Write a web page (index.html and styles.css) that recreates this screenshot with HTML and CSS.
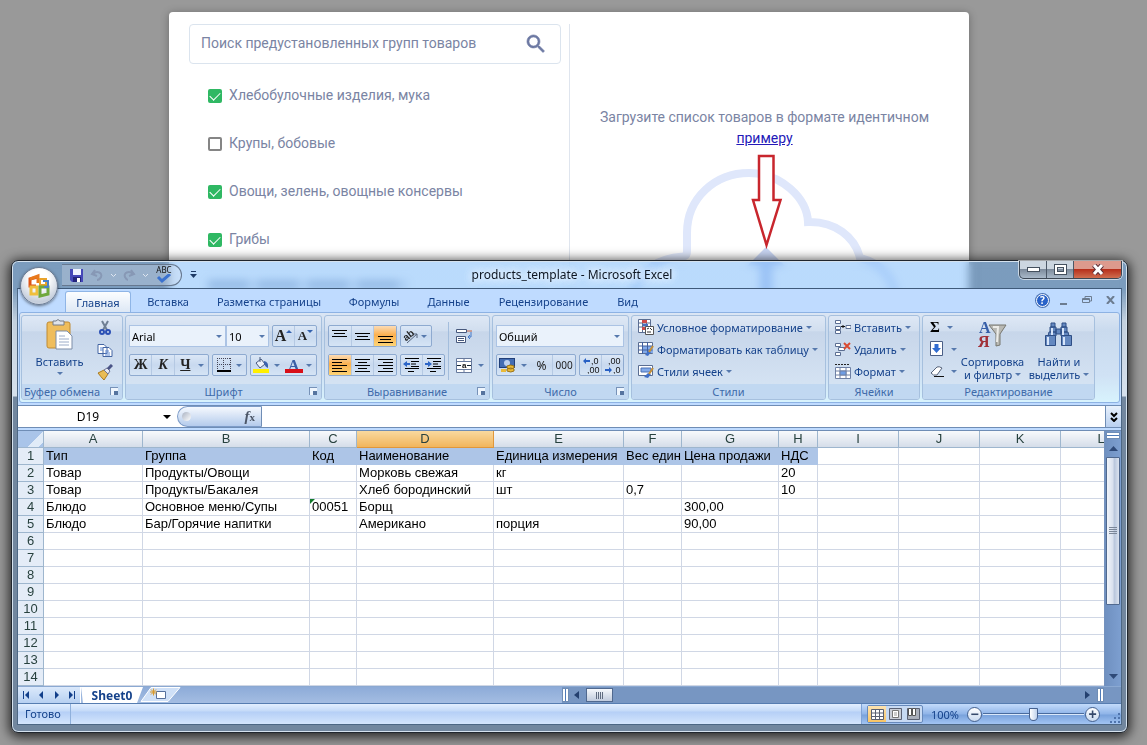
FILE: index.html
```html
<!DOCTYPE html>
<html lang="ru">
<head>
<meta charset="utf-8">
<title>products_template - Microsoft Excel</title>
<link rel="stylesheet" href="styles.css">
</head>
<body>
<main class="dialog">
  <section class="groups">
    <div class="search">
      <input type="text" aria-label="Поиск" placeholder="Поиск предустановленных групп товаров">
      <svg width="24" height="24" viewBox="0 0 24 24" fill="#6d79a3" stroke="#6d79a3" stroke-width=".6"><path d="M15.500 14h-.8l-.3-.3A6.500 6.500 0 1 0 13.700 14.400l.3.3v.8l5 5 1.500-1.500zm-6 0a4.500 4.500 0 1 1 0-9 4.500 4.500 0 0 1 0 9z"/></svg>
    </div>
    <label class="check"><input type="checkbox" checked>Хлебобулочные изделия, мука</label>
    <label class="check"><input type="checkbox">Крупы, бобовые</label>
    <label class="check"><input type="checkbox" checked>Овощи, зелень, овощные консервы</label>
    <label class="check"><input type="checkbox" checked>Грибы</label>
    <div class="more"></div>
  </section>
  <section class="upload">
    <p>Загрузите список товаров в формате идентичном <a href="#">примеру</a></p>
    <svg width="300" height="160" viewBox="0 0 300 160" fill="none">
      <path d="M18 150C18 120 42 105 68 103.500Q72 103 72 98V80C72 45 100 20 134 20C166 20 192 45 193 69C220 68 240 84 245 105C265 110 280 124 281 150" stroke="#dfe7fb" stroke-width="8"/>
      <path d="M151 94l19 19h-13v40h-12v-40h-13z" fill="#c9d6f4"/>
      <path d="M144 3H158.500V47H165.500L151.500 92L138 47H144Z" fill="#fff" stroke="#c8262d" stroke-width="2.500"/>
    </svg>
  </section>
</main>

<section class="window">
  <header class="titlebar">
    <div class="qat">
      <button class="save" aria-label="Сохранить"><svg width="16" height="16"><path d="M1 2h13v13H3l-2-2z" fill="#4548b8"/><path d="M4 2h8v6H4z" fill="#eef3ff"/><path d="M4 10h8v5H4z" fill="#22247c"/><path d="M8 11h3v4H8z" fill="#fff"/></svg></button>
      <button aria-label="Отменить"><svg width="16" height="16" fill="none" stroke="#8798b5" stroke-width="2"><path d="M6 3L3 7l5 2M4 7c4-4 10-1 8 3-1 2-3 3-4 3"/></svg></button>
      <svg class="chev" width="7" height="5" fill="none" stroke="#dfe6f0"><path d="M1 1l2.500 2.500L6 1"/></svg>
      <button aria-label="Повторить"><svg width="16" height="16" fill="none" stroke="#8798b5" stroke-width="2"><path d="M10 3l3 4-5 2M12 7C8 3 2 6 4 10c1 2 2 3 3 3"/></svg></button>
      <svg class="chev" width="7" height="5" fill="none" stroke="#dfe6f0"><path d="M1 1l2.500 2.500L6 1"/></svg>
      <button class="spell" aria-label="Орфография"><span>ABC</span><svg width="16" height="10" fill="none" stroke="#3b72cf" stroke-width="3"><path d="M2 3l4 4 8-7"/></svg></button>
    </div>
    <button class="qat-more" aria-label="Настройка панели"><svg width="7" height="8" fill="#1d3a66"><path d="M1 0h5v1H1zM0 3h7L3.500 7z"/></svg></button>
    <h1>products_template - Microsoft Excel</h1>
    <div class="controls">
      <button aria-label="Свернуть"><svg width="13" height="6"><rect x=".5" y=".5" width="12" height="4" fill="#fff" stroke="#44505e"/></svg></button>
      <button aria-label="Развернуть"><svg width="13" height="11"><rect x="2" y="2" width="9" height="7" fill="none" stroke="#44505e" stroke-width="4"/><rect x="2" y="2" width="9" height="7" fill="none" stroke="#fff" stroke-width="2"/></svg></button>
      <button class="close" aria-label="Закрыть"><svg width="12" height="11" fill="none"><path d="M2 1l8 9M10 1l-8 9" stroke="#5c3038" stroke-width="5"/><path d="M2 1l8 9M10 1l-8 9" stroke="#fff" stroke-width="3"/></svg></button>
    </div>
  </header>
  <button class="orb" aria-label="Кнопка Office"><svg width="26" height="26" fill="none" stroke-width="3"><path d="M12 4l-8 2v7h6" stroke="#dd5417"/><path d="M4 6l8-3v7" stroke="#e8791c"/><path d="M14 6h6v6h-6z" stroke="#e9a32b" stroke-width="2"/><path d="M5 14h6v7H5z" stroke="#f0bf3d"/><path d="M14 14v9l8-2v-7z" stroke="#6fa83d"/><path d="M17 8h5v6h-4" stroke="#4a82c8" stroke-width="2"/></svg></button>

  <div class="client">
    <nav class="tabs">
      <button class="tab active">Главная</button>
      <button class="tab t1">Вставка</button>
      <button class="tab t2">Разметка страницы</button>
      <button class="tab t3">Формулы</button>
      <button class="tab t4">Данные</button>
      <button class="tab t5">Рецензирование</button>
      <button class="tab t6">Вид</button>
      <div class="doc-controls">
        <button class="help" aria-label="Справка">?</button>
        <button aria-label="Свернуть книгу"><svg width="8" height="10"><path d="M0 8h7v2H0z" fill="#6c7c90"/></svg></button>
        <button aria-label="Восстановить книгу"><svg width="10" height="8" fill="none" stroke="#6c7c90"><path d="M3 2V.5h6.500V5H8M.5 2.500h7v4h-7zM0 3.500h8"/></svg></button>
        <button aria-label="Закрыть книгу"><svg width="9" height="8" stroke="#6c7c90" stroke-width="2"><path d="M1 0l7 8M8 0L1 8"/></svg></button>
      </div>
    </nav>

    <div class="ribbon">
      <section class="group clip">
        <div class="body">
          <button class="big"><svg width="30" height="32"><rect x="2" y="3" width="23" height="26" rx="2" fill="#efbd5c" stroke="#bf8a33"/><path d="M8 2h3q2-3 4 0h4v4H8z" fill="#dfe3ea" stroke="#767d88"/><path d="M11 12h11l5 5v13H11z" fill="#fff" stroke="#7d8da8"/><path d="M14 17h6M14 20h10M14 23h10M14 26h10" stroke="#9cacc8"/></svg><span>Вставить</span><i class="caret"></i></button>
          <div class="stack">
            <button aria-label="Вырезать"><svg width="16" height="16" fill="none"><path d="M5 1l5 9M11 1l-5 9" stroke="#6f7f94" stroke-width="2"/><circle cx="5" cy="12" r="2" stroke="#2b50b5" stroke-width="2"/><circle cx="11" cy="12" r="2" stroke="#2b50b5" stroke-width="2"/></svg></button>
            <button aria-label="Копировать"><svg width="16" height="16" fill="#fff" stroke="#4365a3"><path d="M1 2.500h6l3 3v6H1zM6 5.500h6l3 3v6H6z"/><path d="M3 6h3M3 8h3M8 9h4M8 11h5M8 13h5" stroke="#5c86cf"/></svg></button>
            <button aria-label="Формат по образцу"><svg width="16" height="16"><path d="M1 9l6-3 4 4-4 6q-3-3-6-7z" fill="#e9bc55" stroke="#a87820"/><path d="M7 6l3-2 3 3-2 3z" fill="#e6e9f2" stroke="#6d7393"/><path d="M11 5l4-4" stroke="#4a5487" stroke-width="3"/></svg></button>
          </div>
        </div>
        <footer>Буфер обмена<i class="launch"></i></footer>
      </section>

      <section class="group font">
        <div class="body rows">
          <div class="row">
            <div class="picks"><span class="pick wide"><select aria-label="Шрифт"><option>Arial</option></select><i class="caret"></i></span><span class="pick size"><select aria-label="Размер"><option>10</option></select><i class="caret"></i></span></div>
            <div class="set w45"><button class="serif big-a" aria-label="Увеличить размер">A<i class="tri up"></i></button><button class="serif small-a" aria-label="Уменьшить размер">A<i class="tri"></i></button></div>
          </div>
          <div class="row">
            <div class="set w80"><button class="serif">Ж</button><button class="serif"><em>К</em></button><button class="serif"><u>Ч</u></button><i class="caret"></i></div>
            <div class="set w35"><button aria-label="Границы"><svg width="14" height="14" stroke="#445"><path d="M0 .5h14M0 6.500h14M.5 0v12M6.500 0v12M13.500 0v12" stroke-dasharray="1 1"/><path d="M0 13h14" stroke="#000" stroke-width="2"/></svg></button><i class="caret"></i></div>
            <div class="set w67"><button aria-label="Заливка"><svg width="17" height="16"><path d="M3 6l5-4 4 5-5 4z" fill="#eef2fa" stroke="#47587c"/><path d="M11 4q5 1 4 7-3-1-4-5z" fill="#3c63ad"/><path d="M7 0v5" stroke="#47587c"/><path d="M0 12h16v4H0z" fill="#ffef00"/></svg></button><i class="caret"></i><button class="fc" aria-label="Цвет текста">A</button><i class="caret"></i></div>
          </div>
        </div>
        <footer>Шрифт<i class="launch"></i></footer>
      </section>

      <section class="group align">
        <div class="body split">
          <div class="rows">
            <div class="row">
              <div class="set w69"><button aria-label="По верхнему краю"><svg width="15" height="15" stroke="#000"><path d="M0 1.500h15M2 4.500h11M0 7.500h15"/></svg></button><button aria-label="По середине"><svg width="15" height="15" stroke="#000"><path d="M0 4.500h15M2 7.500h11M0 10.500h15"/></svg></button><button class="on" aria-label="По нижнему краю"><svg width="15" height="15" stroke="#000"><path d="M0 7.500h15M2 10.500h11M0 13.500h15"/></svg></button></div>
              <div class="set w32"><button aria-label="Ориентация"><svg width="18" height="18"><path d="M6 16L16 7m0 0v4m0-4h-4" stroke="#55647c" fill="none"/><text x="2" y="12" transform="rotate(-38 7 9)" class="ab">ab</text></svg></button><i class="caret"></i></div>
            </div>
            <div class="row">
              <div class="set w69"><button class="on" aria-label="По левому краю"><svg width="15" height="15" stroke="#000"><path d="M0 1.500h15M0 4.500h10M0 7.500h15M0 10.500h10M0 13.500h15"/></svg></button><button aria-label="По центру"><svg width="15" height="15" stroke="#000"><path d="M0 1.500h15M3 4.500h9M0 7.500h15M3 10.500h9M0 13.500h15"/></svg></button><button aria-label="По правому краю"><svg width="15" height="15" stroke="#000"><path d="M0 1.500h15M5 4.500h10M0 7.500h15M5 10.500h10M0 13.500h15"/></svg></button></div>
              <div class="set w45"><button aria-label="Уменьшить отступ"><svg width="17" height="16" stroke="#000"><path d="M2 1.500h14M8 4.500h8M8 7h5M8 9.500h8M2 11.500h14M5 14.500h6"/><path d="M0 7l4-3v2h3v2H4v2z" fill="#2d66c8" stroke="none"/></svg></button><button aria-label="Увеличить отступ"><svg width="17" height="16" stroke="#000"><path d="M2 1.500h14M8 4.500h8M8 7h5M8 9.500h8M2 11.500h14M5 14.500h6"/><path d="M7 7L3 4v2H0v2h3v2z" fill="#2d66c8" stroke="none"/></svg></button></div>
            </div>
          </div>
          <div class="wrap">
            <button aria-label="Перенос текста"><svg width="17" height="16" fill="#fff" stroke="#47587c"><path d="M.5 1.500h10v3H.5zM.5 8.500h9v6H.5z"/><path d="M11 3h5" stroke="#c4613d"/><path d="M2 10.500h6M2 12.500h6"/><path d="M15 4v5h-3m2-2l-2 2 2 2" stroke="#4378c8" fill="none"/></svg></button>
            <button aria-label="Объединить"><svg width="16" height="15" fill="#fff" stroke="#66799c"><path d="M.5.5h15v14H.5zM.5 3.500h15M.5 11.500h15M8 0v4M8 11v4"/><path d="M1 7.500h4M11 7.500h4" stroke="#123"/><text x="6" y="10" class="tiny">a</text></svg><i class="caret"></i></button>
          </div>
        </div>
        <footer>Выравнивание<i class="launch"></i></footer>
      </section>

      <section class="group number">
        <div class="body rows">
          <div class="row"><span class="pick full"><select aria-label="Числовой формат"><option>Общий</option></select><i class="caret"></i></span></div>
          <div class="row">
            <div class="set w80"><button aria-label="Денежный формат"><svg width="17" height="16"><rect x=".5" y="1.500" width="15" height="9" fill="#426cb3" stroke="#213f78"/><circle cx="8" cy="6" r="3" fill="#bcd0ef"/><path d="M8 9q4-2 7 0v2q-3 2-7 0zM8 12q4-2 7 0v2q-3 2-7 0z" fill="#e9ba38" stroke="#9a731a"/><path d="M2 12h5v3H2z" fill="#e9ba38"/></svg></button><i class="caret"></i><button class="num">%</button><button class="num zeros">000</button></div>
            <div class="set w45"><button aria-label="Увеличить разрядность"><svg width="18" height="18"><path d="M1 5l3-3v2h4v2H4v2z" fill="#2860c4"/><text x="9" y="8" class="dec">,0</text><text x="5" y="17" class="dec">,00</text></svg></button><button aria-label="Уменьшить разрядность"><svg width="18" height="18"><text x="4" y="8" class="dec">,00</text><path d="M8 14l-3-3v2H1v2h4v2z" fill="#2860c4"/><text x="9" y="17" class="dec">,0</text></svg></button></div>
          </div>
        </div>
        <footer>Число<i class="launch"></i></footer>
      </section>

      <section class="group styles">
        <div class="body list">
          <button><svg width="16" height="16"><path d="M.5.5h12v13H.5zM.5 4h12M.5 8h12M4.500 0v14M8.500 0v14" fill="#fff" stroke="#5b6e92"/><path d="M4 1h5v3H4zM4 8h4v3H4z" fill="#cf4b48"/><path d="M5 5h5v2H5z" fill="#496fc0"/><path d="M7.500 7.500h8v8h-8z" fill="#fff" stroke="#555"/><path d="M9 10l2-1M9 13h4M12 9l2 2" stroke="#333"/></svg><span>Условное форматирование</span><i class="caret"></i></button>
          <button><svg width="16" height="16"><path d="M.5 1.500h14v11H.5z" fill="#fff" stroke="#5b6e92"/><path d="M4 5h11v7H4z" fill="#82aae9"/><path d="M.5 5h14M.5 9h14M4.500 1v12M9.500 1v12" stroke="#405f9e"/><path d="M7 14l3-4 3 1-3 4z" fill="#3f6fc7"/><path d="M11 11l4-6" stroke="#c79036" stroke-width="2"/></svg><span>Форматировать как таблицу</span><i class="caret"></i></button>
          <button><svg width="16" height="16"><path d="M.5 2.500h14v10H.5z" fill="#fff" stroke="#5b6e92"/><path d="M3 5h10v4H3z" fill="#82aae9" stroke="#4a70b5"/><path d="M6 14l4-4 3 1-3 4z" fill="#3f6fc7"/><path d="M11 11l4-6" stroke="#c79036" stroke-width="2"/></svg><span>Стили ячеек</span><i class="caret"></i></button>
        </div>
        <footer>Стили</footer>
      </section>

      <section class="group cells">
        <div class="body list">
          <button><svg width="16" height="16" fill="#fff" stroke="#5b6e92"><path d="M.5 1.500h5v3h-5zM.5 7.500h5v3h-5zM.5 11.500h5v3h-5zM11 6.500h5v3h-5z"/><path d="M6 7.500h4M8 6v3" stroke="#111"/></svg><span>Вставить</span><i class="caret"></i></button>
          <button><svg width="16" height="16" fill="#fff" stroke="#5b6e92"><path d="M.5 2.500h5v3h-5zM3.500 6.500h6v3h-6zM.5 11.500h5v3h-5z"/><path d="M9 2l6 6M15 2L9 8" stroke="#d94a31" stroke-width="2"/></svg><span>Удалить</span><i class="caret"></i></button>
          <button><svg width="16" height="16" fill="#fff" stroke="#6e80a4"><path d="M.5 4.500h15v11H.5zM.5 8h15M.5 12h15M5 4v11M11 4v11"/><path d="M5 8h6v4H5z" fill="#6f9de4"/><path d="M0 1.500h14" stroke="#222" stroke-dasharray="2 1"/></svg><span>Формат</span><i class="caret"></i></button>
        </div>
        <footer>Ячейки</footer>
      </section>

      <section class="group edit">
        <div class="body">
          <div class="stack edits">
            <button class="sigma" aria-label="Сумма">Σ<i class="caret"></i></button>
            <button aria-label="Заполнить"><svg width="14" height="16"><path d="M.5.5h12v14H.5z" fill="#fff" stroke="#4a5f87"/><path d="M4.500 3h4v4H11l-4.500 5L2 7h2.500z" fill="#2f6bd0"/></svg><i class="caret"></i></button>
            <button aria-label="Очистить"><svg width="14" height="13"><path d="M1 8l6-6q2-1 5 1l-5 7q-4 1-6-2z" fill="#fff" stroke="#56637b"/><path d="M4 11.500h10" stroke="#111"/></svg><i class="caret"></i></button>
          </div>
          <button class="big sort"><svg width="30" height="32"><path d="M11 6h17l-6 9v11l-4 1V15z" fill="#b9b9b4" stroke="#77776f"/><path d="M15 8h5l-1 15" fill="none" stroke="#ecece8" stroke-width="2"/><text x="1" y="14" class="az a">А</text><text x="0" y="28" class="az z">Я</text></svg><span>Сортировка</span><span>и фильтр<i class="caret"></i></span></button>
          <button class="big find"><svg width="30" height="32" fill="#6488c0" stroke="#2f4e85"><path d="M5 13h7v4H4zM17 13h7l1 4h-8zM6 8h6v5H6zM17 8h6v5h-6zM7 4h4v4H7zM18 4h4v4h-4zM12 10h5v5h-5z"/><path d="M1.500 16.500h10v10h-10zM17.500 16.500h10v10h-10z"/><path d="M4 18v8M20 18v8M8 9v7M19 9v7" stroke="#d7e5fa" stroke-width="2"/></svg><span>Найти и</span><span>выделить<i class="caret"></i></span></button>
        </div>
        <footer>Редактирование</footer>
      </section>
    </div>

    <div class="formula">
      <input class="name" type="text" aria-label="Имя" value="D19"><i class="caret black"></i>
      <div class="fx"><i class="dot"></i><span><em>f</em>x</span></div>
      <input class="bar" type="text" aria-label="Строка формул">
      <button class="expand" aria-label="Развернуть"><svg width="8" height="10" fill="none" stroke="#000" stroke-width="2"><path d="M1 1l3 3 3-3M1 6l3 3 3-3"/></svg></button>
    </div>

    <div class="sheet">
      <div class="grid">
        <table>
          <colgroup><col class="c0"><col class="ca"><col class="cb"><col class="cc"><col class="cd"><col class="ce"><col class="cf"><col class="cg"><col class="ch"><col class="ci"><col class="ci"><col class="ci"><col class="ci"></colgroup>
          <thead><tr><th class="corner"></th><th>A</th><th>B</th><th>C</th><th class="sel">D</th><th>E</th><th>F</th><th>G</th><th>H</th><th>I</th><th>J</th><th>K</th><th>L</th></tr></thead>
          <tbody>
          <tr class="head"><th>1</th><td>Тип</td><td>Группа</td><td>Код</td><td>Наименование</td><td>Единица измерения</td><td>Вес един</td><td>Цена продажи</td><td>НДС</td><td></td><td></td><td></td><td></td></tr>
          <tr><th>2</th><td>Товар</td><td>Продукты/Овощи</td><td></td><td>Морковь свежая</td><td>кг</td><td></td><td></td><td>20</td><td></td><td></td><td></td><td></td></tr>
          <tr><th>3</th><td>Товар</td><td>Продукты/Бакалея</td><td></td><td>Хлеб бородинский</td><td>шт</td><td>0,7</td><td></td><td>10</td><td></td><td></td><td></td><td></td></tr>
          <tr><th>4</th><td>Блюдо</td><td>Основное меню/Супы</td><td class="flag">00051</td><td>Борщ</td><td></td><td></td><td>300,00</td><td></td><td></td><td></td><td></td><td></td></tr>
          <tr><th>5</th><td>Блюдо</td><td>Бар/Горячие напитки</td><td></td><td>Американо</td><td>порция</td><td></td><td>90,00</td><td></td><td></td><td></td><td></td><td></td></tr>
          <tr><th>6</th><td></td><td></td><td></td><td></td><td></td><td></td><td></td><td></td><td></td><td></td><td></td><td></td></tr>
          <tr><th>7</th><td></td><td></td><td></td><td></td><td></td><td></td><td></td><td></td><td></td><td></td><td></td><td></td></tr>
          <tr><th>8</th><td></td><td></td><td></td><td></td><td></td><td></td><td></td><td></td><td></td><td></td><td></td><td></td></tr>
          <tr><th>9</th><td></td><td></td><td></td><td></td><td></td><td></td><td></td><td></td><td></td><td></td><td></td><td></td></tr>
          <tr><th>10</th><td></td><td></td><td></td><td></td><td></td><td></td><td></td><td></td><td></td><td></td><td></td><td></td></tr>
          <tr><th>11</th><td></td><td></td><td></td><td></td><td></td><td></td><td></td><td></td><td></td><td></td><td></td><td></td></tr>
          <tr><th>12</th><td></td><td></td><td></td><td></td><td></td><td></td><td></td><td></td><td></td><td></td><td></td><td></td></tr>
          <tr><th>13</th><td></td><td></td><td></td><td></td><td></td><td></td><td></td><td></td><td></td><td></td><td></td><td></td></tr>
          <tr><th>14</th><td></td><td></td><td></td><td></td><td></td><td></td><td></td><td></td><td></td><td></td><td></td><td></td></tr>
          </tbody>
        </table>
      </div>
      <div class="vscroll">
        <i class="vsplit"></i>
        <svg width="14" height="18"><path d="M3 12l4.500-5 4.500 5z" fill="#2f4a78"/></svg>
        <div class="vthumb"><svg width="8" height="8" stroke="#7b8799"><path d="M0 .5h8M0 2.500h8M0 4.500h8M0 6.500h8"/></svg></div>
        <svg class="down" width="14" height="18"><path d="M3 7h9l-4.500 5z" fill="#2f4a78"/></svg>
      </div>
    </div>

    <div class="sheetbar">
      <div class="navs">
        <button aria-label="Первый лист"><svg width="8" height="8" fill="#123f8a"><path d="M1 0h1v8H1zM7 0v8L3 4z"/></svg></button>
        <button aria-label="Предыдущий лист"><svg width="8" height="8" fill="#123f8a"><path d="M6 0v8L2 4z"/></svg></button>
        <button aria-label="Следующий лист"><svg width="8" height="8" fill="#123f8a"><path d="M2 0v8l4-4z"/></svg></button>
        <button aria-label="Последний лист"><svg width="8" height="8" fill="#123f8a"><path d="M1 0v8l4-4zM6 0h1v8H6z"/></svg></button>
      </div>
      <button class="sheet-tab">Sheet0</button>
      <button class="new-tab" aria-label="Вставить лист"><svg width="46" height="16"><path d="M2 14.500L12 .5h29L29 14.500z" fill="#cfe0f7" stroke="#fff"/><path d="M17.500 4.500h9v7h-9z" fill="#fff" stroke="#56709c"/><path d="M11 5h7M14.500 1.500v7M12 2.500l5 5M17 2.500l-5 5" stroke="#d99a2c"/></svg></button>
      <div class="hscroll">
        <i class="hsplit"></i>
        <svg width="17" height="15"><path d="M10 3v8L5 7z" fill="#24406f"/></svg>
        <div class="hthumb"><svg width="8" height="7" stroke="#5f6c80"><path d="M.5 0v7M2.500 0v7M4.500 0v7M6.500 0v7"/></svg></div>
        <svg class="right" width="17" height="15"><path d="M6 3v8l5-4z" fill="#24406f"/></svg>
        <i class="hsplit"></i>
      </div>
    </div>

    <footer class="status">
      <span class="ready">Готово</span>
      <div class="zoom">
        <div class="views">
          <button class="on" aria-label="Обычный"><svg width="13" height="11"><path d="M.5.500h12v10H.5zM.5 4h12M.5 7.500h12M4.500 0v11M8.500 0v11" fill="#fff" stroke="#5a6173"/></svg></button>
          <button aria-label="Разметка страницы"><svg width="13" height="12"><path d="M.5.500h12v11H.5z" fill="#c9ced8" stroke="#5a6173"/><path d="M3.500 2.500h6v7h-6z" fill="#fff" stroke="#777"/><path d="M5 5h3M5 7h3" stroke="#999"/></svg></button>
          <button aria-label="Страничный"><svg width="13" height="12"><path d="M.5.500h12v11H.5z" fill="#a9afbb" stroke="#5a6173"/><path d="M1.500.5h3v7h-3zM5.500.5h3v7h-3z" fill="#fff" stroke="#555"/></svg></button>
        </div>
        <span class="percent">100%</span>
        <button class="round" aria-label="Уменьшить">−</button>
        <input type="range" aria-label="Масштаб" min="0" max="100" value="50">
        <button class="round" aria-label="Увеличить">+</button>
        <svg class="grip" width="12" height="12" fill="#4f74ad"><path d="M9 1h2v2H9zM9 5h2v2H9zM9 9h2v2H9zM5 5h2v2H5zM5 9h2v2H5zM1 9h2v2H1z"/></svg>
      </div>
    </footer>
  </div>
</section>
</body>
</html>
```
FILE: styles.css
```css
* { box-sizing: border-box; }
body { margin: 0; padding: 12px 9px 0 0; min-height: 100vh; background: #999; font-family: "Noto Sans", sans-serif; font-size: 11px; overflow: hidden; }
button, input, select { font: inherit; color: inherit; margin: 0; padding: 0; border: 0; background: none; outline: 0; }
button { display: flex; align-items: center; justify-content: center; }
svg { display: block; flex: none; }
i { display: block; flex: none; }

/* upload dialog */
.dialog { display: grid; grid-template-columns: 1fr 1fr; max-width: 800px; margin: 0 auto; padding: 12px 18px 60px 20px; background: #fff; border-radius: 4px; box-shadow: 0 1px 8px rgba(0,0,0,.3); font-family: Roboto, sans-serif; font-size: 14px; color: #7a84a3; }
.groups { padding-right: 8px; border-right: 1px solid #dfe5ee; }
.search { display: flex; align-items: center; height: 40px; padding: 0 12px 0 11px; margin-bottom: 8px; border: 1px solid #dbe4ee; border-radius: 4px; }
.search input { flex: 1; min-width: 0; height: 36px; padding-bottom: 2px; }
.search input::placeholder { color: inherit; opacity: 1; }
.check { display: flex; align-items: center; gap: 7px; height: 48px; padding: 0 0 2px 19px; }
.check input { appearance: none; width: 14px; height: 14px; margin-top: 2px; border: 2px solid #858585; border-radius: 2px; display: grid; place-items: center; }
.check input:checked { background: #2fb863; border-color: #2fb863; }
.check input:checked::after { content: ""; width: 9px; height: 5px; margin-bottom: 3px; border: solid #fff; border-width: 0 0 1px 1px; transform: rotate(-45deg); }
.more { width: 200px; height: 10px; margin: 16px 0 0 19px; background: repeating-linear-gradient(90deg, #c3cbdb 0 40px, #e6eaf2 40px 50px); }
.upload { padding-left: 8px; text-align: center; }
.upload p { width: 340px; margin: 83px auto 4px; line-height: 21px; }
.upload a { color: #2419b8; }
.upload svg { margin: 0 auto; }

/* spreadsheet window */
.window { position: absolute; left: 11px; right: 19px; top: 260px; padding: 1px 5px 7px; border: 1px solid #20262e; border-radius: 7px; background: linear-gradient(rgba(74,160,248,.38) 28px, rgba(205,222,240,.8) 60px, rgba(218,229,241,.95) 135px, #72879f 136px); backdrop-filter: blur(4px); box-shadow: inset 0 0 0 1px #d5e2ee, 0 2px 12px 2px rgba(0,0,0,.75); color: #15428b; }
.titlebar { display: flex; height: 26px; }
.qat { display: flex; align-items: center; width: 120px; height: 22px; margin: 2px 0 0 45px; padding-left: 4px; border: 1px solid #66788f; border-left: 0; border-radius: 0 12px 12px 0; background: rgba(225,230,238,.3); }
.qat button { width: 18px; height: 20px; }
.qat .save { width: 22px; }
.qat .chev { margin: 0 3px 0 4px; }
.qat .spell { flex-direction: column; width: 20px; font-size: 8px; line-height: 8px; color: #111; margin-left: 2px; }
.qat-more { width: 22px; height: 26px; }
.titlebar h1 { flex: 1; margin: 0; padding-right: 79px; text-align: center; font-weight: 400; font-size: 12px; line-height: 26px; color: #0d1622; text-shadow: 0 0 8px #fff, 0 0 8px #fff; }
.controls { display: flex; height: 18px; margin-top: -1px; border: 1px solid #3c4754; border-top: 0; border-radius: 0 0 5px 5px; overflow: hidden; background: linear-gradient(#ccd6e0 45%, #7d8b9c 50%, #a9b9c9); box-shadow: 0 0 0 1px rgba(255,255,255,.6); }
.controls button { width: 27px; border-right: 1px solid #4b5766; }
.controls .close { width: 47px; border: 0; background: linear-gradient(#dd9a8d 45%, #b7301c 50%, #cf6e50); }
.orb { position: absolute; left: 8px; top: 6px; width: 38px; height: 38px; border-radius: 50%; border: 1px solid #6c7b92; background: radial-gradient(circle at 50% 30%, #fff 30%, #c4cddb 75%, #f2f6fb); box-shadow: 0 1px 3px rgba(0,0,0,.5); }
.client { border: 1px solid #4d6784; border-top-color: #3f5a7a; background: #bfdbff; }

.tabs { display: flex; height: 23px; padding: 2px 6px 0 47px; }
.tab { height: 21px; padding-bottom: 1px; }
.tab.active { width: 66px; padding: 0; border: 1px solid #8fb5e6; border-bottom: 0; border-radius: 3px 3px 0 0; background: linear-gradient(#fbfdff, #dde8f5); }
.t1 { width: 74px; } .t2 { width: 128px; } .t3 { width: 82px; } .t4 { width: 67px; } .t5 { width: 123px; } .t6 { width: 45px; }
.doc-controls { display: flex; align-items: center; gap: 14px; margin-left: auto; padding-bottom: 3px; }
.help { width: 13px; height: 13px; margin-right: -3px; border: 1px solid #fff; border-radius: 50%; background: #2862c9; color: #fff; font-weight: 700; font-size: 10px; box-shadow: 0 0 0 1px #4a72b4; }

.ribbon { display: flex; gap: 2px; padding: 2px 1px; margin: 0 1px; border: 1px solid #8db2e3; border-radius: 3px; background: linear-gradient(#dbe6f4, #c9daee 20%, #d0e2f5 70%, #d8f3fd); }
.group { flex: none; border: 1px solid #a6c0de; border-radius: 3px; overflow: hidden; background: linear-gradient(#dee8f5, #d1deef 18%, #c7d6ea 19%, #d8e6f5); }
.group .body { height: 68px; }
.group footer { display: flex; align-items: center; justify-content: center; position: relative; height: 15px; background: #c1d8f1; color: #3e6aaa; }
.launch { position: absolute; right: 4px; top: 3px; width: 8px; height: 8px; border: 1px solid #7792b8; border-width: 1px 0 0 1px; background: linear-gradient(#56749f, #56749f) 100% 100% / 4px 4px no-repeat, #eef5fd; }
.clip { width: 102px; } .font { width: 197px; } .align { width: 166px; } .number { width: 137px; } .styles { width: 195px; } .cells { width: 92px; } .edit { width: 173px; }
.clip footer { padding-right: 20px; }
.caret { width: 0; height: 0; border: 3px solid transparent; border-top-color: #5679ad; border-bottom: 0; }
.clip .body, .edit .body, .split { display: flex; }
.big { flex-direction: column; justify-content: flex-start; line-height: 13px; padding-top: 3px; }
.big svg { margin-bottom: 4px; }
.big span { display: flex; align-items: center; gap: 3px; white-space: nowrap; }
.big > .caret { margin-top: 4px; }
.clip .big { width: 75px; }
.stack { display: flex; flex-direction: column; padding-top: 1px; }
.stack button { height: 22px; }
.rows { display: flex; flex-direction: column; gap: 7px; padding: 9px 3px 0; }
.row { display: flex; gap: 3px; }
.set { display: flex; align-items: center; justify-content: space-evenly; height: 22px; border: 1px solid #8eaad0; border-radius: 2px; background: linear-gradient(#dbe7f6, #c8d9ef 50%, #d5e4f5); }
.set button { flex: 1; height: 20px; position: relative; }
.set button + button { border-left: 1px solid #b5c9e3; }
.set .caret { margin: 0 4px 0 2px; }
.w80 { width: 80px; } .w45 { width: 45px; } .w35 { width: 35px; } .w67 { width: 67px; } .w69 { width: 69px; } .w32 { width: 32px; }
.set .on { background: linear-gradient(#fbdbb5, #fbb04f 45%, #fdd477); }
.picks { display: flex; }
.pick { position: relative; display: block; height: 22px; }
.pick select { appearance: none; width: 100%; height: 22px; padding-left: 2px; border: 1px solid #abc3e4; background: #eaf2fb; color: #000; }
.pick .caret { position: absolute; right: 4px; top: 10px; }
.wide { width: 97px; } .size { width: 43px; } .full { width: 128px; }
.serif { font-family: "Liberation Serif", serif; font-weight: 700; font-size: 14px; color: #222; }
.big-a { font-size: 16px; }
.small-a { font-size: 13px; }
.tri { width: 0; height: 0; border: 3px solid transparent; border-top-color: #3462ae; border-bottom: 0; margin-bottom: 9px; }
.tri.up { border-top: 0; border-bottom: 3px solid #3462ae; }
.fc { font-family: "Liberation Serif", serif; font-weight: 700; font-size: 15px; line-height: 14px; color: #3a5ea6; }
.fc::after { content: ""; position: absolute; left: 1px; right: 1px; bottom: 2px; height: 4px; background: #d80f19; }
.ab { font: 700 10px "Liberation Sans", sans-serif; fill: #222; }
.tiny { font: 700 8px "Liberation Sans", sans-serif; fill: #111; stroke: none; }
.dec { font: 9px "Liberation Sans", sans-serif; fill: #111; }
.wrap { display: flex; flex-direction: column; gap: 7px; width: 35px; margin: 6px 0 4px; padding: 3px 0 0 7px; border-left: 1px solid #a3bddc; }
.wrap button { height: 22px; justify-content: flex-start; gap: 6px; }
.num { color: #222; font-size: 12px; }
.zeros { font-size: 10px; }
.list { display: flex; flex-direction: column; padding: 0 0 0 6px; }
.list button { height: 22px; gap: 3px; justify-content: flex-start; white-space: nowrap; }
.edits { width: 34px; padding: 0 0 0 7px; }
.edits button { gap: 7px; justify-content: flex-start; }
.sigma { font: 700 15px "Liberation Serif", serif; color: #000; }
.sort { width: 71px; } .find { width: 62px; }
.az { font: 700 16px "Liberation Serif", serif; }
.a { fill: #365ea8; } .z { fill: #a03038; }

.formula { display: flex; align-items: center; height: 23px; margin-top: 2px; background: #fff; border: 1px solid #6f8db5; border-width: 1px 0; color: #000; }
.name { width: 140px; text-align: center; font-size: 12px; }
.black { border-width: 4px 4px 0; border-top-color: #000; margin: 0 5px; }
.fx { display: flex; align-items: center; justify-content: space-between; width: 85px; height: 21px; margin-left: 1px; padding: 0 6px 0 4px; border: 1px solid #7d9cc8; border-right-color: #6f8db5; border-radius: 11px 0 0 11px; background: linear-gradient(#f5f9fe, #b4cbec); font: 700 11px "Liberation Serif", serif; color: #4d5768; }
.fx em { font-size: 15px; }
.dot { width: 9px; height: 9px; border-radius: 50%; background: linear-gradient(135deg, #a9b2c2, #fff); }
.bar { flex: 1; min-width: 0; }
.expand { width: 16px; height: 21px; border-left: 1px solid #6f8db5; background: linear-gradient(#e8f1fc, #b9d0f0); }

.sheet { display: flex; margin-top: 2px; border-top: 1px solid #6f8db5; }
.grid { flex: 1; min-width: 0; overflow: hidden; background: #fff; }
table { width: 1124px; table-layout: fixed; border-collapse: separate; border-spacing: 0; font-family: "Liberation Sans", sans-serif; font-size: 13px; color: #000; }
.c0 { width: 26px; } .ca { width: 99px; } .cb { width: 167px; } .cc { width: 47px; } .cd { width: 137px; } .ce { width: 130px; } .cf { width: 58px; } .cg { width: 97px; } .ch { width: 39px; } .ci { width: 81px; }
th, td { height: 17px; padding: 0 0 0 2px; line-height: 16px; border: solid #d0d7e5; border-width: 0 1px 1px 0; white-space: nowrap; overflow: hidden; text-align: left; }
th { padding: 0; text-align: center; font-weight: 400; color: #27413e; border-color: #9eb6ce; background: #e4ecf7; }
thead th { background: linear-gradient(#f8fafc, #d5dde9); }
thead .sel { background: linear-gradient(#f9d99f, #f1b55c); border-color: #e0973b; }
thead .corner { background: linear-gradient(135deg, #a9c4e9 62%, #e0ebf8 62% 88%, #a9c4e9 88%); }
.head td:nth-child(-n+9) { background: #adc5e7; border-color: #adc5e7; }
.flag { background: linear-gradient(135deg, #137a2c 3px, transparent 4px); }
.vscroll { display: flex; flex-direction: column; width: 17px; padding: 1px; border-left: 1px solid #7592bd; background: linear-gradient(90deg, #6f90c0, #7d9fd0); }
.vsplit { height: 7px; border: 1px solid #6f8db5; background: linear-gradient(#fff 2px, #4f7bb8 2px 3px, #fff 3px); }
.vthumb { display: grid; place-items: center; height: 148px; border: 1px solid #50698f; border-radius: 1px; background: linear-gradient(90deg, #f1f5fb, #d8e0ee 50%, #b8c6dc 60%, #dbe3f0); }
.down { margin-top: auto; }

.sheetbar { display: flex; height: 17px; border-top: 1px solid #8ba9d2; background: linear-gradient(#8dabd8, #a4bde2); }
.navs { display: flex; width: 63px; background: linear-gradient(#dbe9fb, #b7d0f1); border-right: 1px solid #fff; }
.navs button { flex: 1; }
.sheet-tab { width: 62px; background: #fff; font: 700 12px "Noto Sans", sans-serif; clip-path: polygon(0 0, 100% 0, calc(100% - 6px) 100%, 2px 100%); }
.new-tab { width: 46px; margin-left: -4px; }
.hscroll { display: flex; align-items: center; flex: 1; margin-left: 377px; background: #7796c2; }
.hsplit { width: 7px; height: 14px; border: 1px solid #6f8db5; background: linear-gradient(90deg, #fff 2px, #4f7bb8 2px 3px, #fff 3px); }
.hthumb { display: grid; place-items: center; width: 27px; height: 14px; border: 1px solid #50698f; background: linear-gradient(#f5f8fc, #c0cbdd); }
.right { margin-left: auto; }
.hscroll .hsplit:last-child { margin: 0 17px 0 1px; }

.status { display: flex; height: 21px; border-top: 1px solid #567db1; background: linear-gradient(#e3efff, #c4daf8 35%, #b5cff6 40%, #d4e5fc); }
.ready { width: 53px; padding-left: 7px; line-height: 19px; border-right: 1px solid #8fb0dc; }
.zoom { display: flex; align-items: center; margin-left: auto; padding: 0 0 0 5px; border-left: 1px solid #7fa2d4; background: linear-gradient(#c3dbfb, #8fb4e8 50%, #79a2dc 55%, #a2c4f2); }
.views { display: flex; border: 1px solid #6689bb; border-radius: 2px; background: #c7daf3; height: 18px; }
.views button { width: 18px; }
.views .on { background: linear-gradient(#fde3b1, #f8c463); }
.percent { width: 44px; text-align: center; }
.round { width: 15px; height: 15px; border: 1px solid #45618f; border-radius: 50%; background: linear-gradient(#fff, #c9daf0); font: 700 14px/12px "Liberation Sans", sans-serif; color: #36496b; }
.zoom input { appearance: none; width: 101px; height: 16px; margin: 0 1px; background: linear-gradient(transparent 7px, #496b9e 7px 8px, #dbe9fb 8px 9px, transparent 9px); }
.zoom input::-webkit-slider-thumb { appearance: none; width: 9px; height: 13px; border: 1px solid #45618f; border-radius: 1px 1px 5px 5px; background: linear-gradient(90deg, #fff, #c0d2ec); }
.grip { align-self: flex-end; margin: 0 0 0 9px; }
```
